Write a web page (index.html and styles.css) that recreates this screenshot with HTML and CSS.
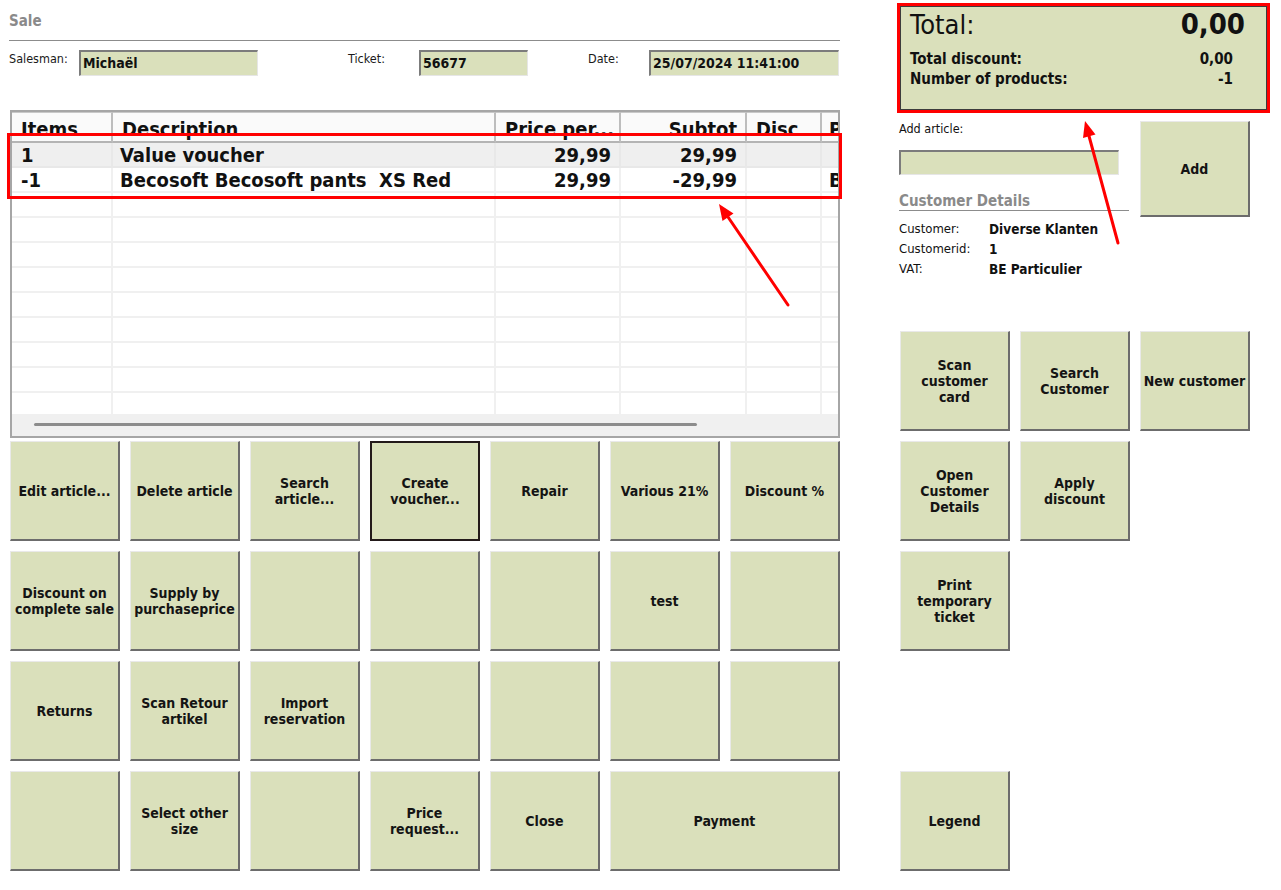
FILE: index.html
```html
<!DOCTYPE html>
<html>
<head>
<meta charset="utf-8">
<title>Sale</title>
<link rel="stylesheet" href="styles.css">
</head>
<body>
<div class="screen">
  <div class="left">
    <div class="title">Sale</div>
    <div class="form-row">
      <div class="lbl">Salesman:</div>
      <div class="field">Michaël</div>
      <div></div>
      <div class="lbl">Ticket:</div>
      <div class="field">56677</div>
      <div></div>
      <div class="lbl">Date:</div>
      <div class="field">25/07/2024 11:41:00</div>
    </div>

    <div class="grid">
      <div class="grid-head">
        <div class="hc">Items</div>
        <div class="hc">Description</div>
        <div class="hc num">Price per...</div>
        <div class="hc num">Subtot</div>
        <div class="hc">Disc</div>
        <div class="hc last">P</div>
      </div>
      <div class="grid-body">
        <div class="gr sel"><div class="c">1</div><div class="c">Value voucher</div><div class="c num">29,99</div><div class="c num">29,99</div><div class="c"></div><div class="c last"></div></div>
        <div class="gr"><div class="c">-1</div><div class="c">Becosoft Becosoft pants&nbsp; XS Red</div><div class="c num">29,99</div><div class="c num">-29,99</div><div class="c"></div><div class="c last">B</div></div>
        <div class="gr"><div class="c"></div><div class="c"></div><div class="c"></div><div class="c"></div><div class="c"></div><div class="c last"></div></div>
        <div class="gr"><div class="c"></div><div class="c"></div><div class="c"></div><div class="c"></div><div class="c"></div><div class="c last"></div></div>
        <div class="gr"><div class="c"></div><div class="c"></div><div class="c"></div><div class="c"></div><div class="c"></div><div class="c last"></div></div>
        <div class="gr"><div class="c"></div><div class="c"></div><div class="c"></div><div class="c"></div><div class="c"></div><div class="c last"></div></div>
        <div class="gr"><div class="c"></div><div class="c"></div><div class="c"></div><div class="c"></div><div class="c"></div><div class="c last"></div></div>
        <div class="gr"><div class="c"></div><div class="c"></div><div class="c"></div><div class="c"></div><div class="c"></div><div class="c last"></div></div>
        <div class="gr"><div class="c"></div><div class="c"></div><div class="c"></div><div class="c"></div><div class="c"></div><div class="c last"></div></div>
        <div class="gr"><div class="c"></div><div class="c"></div><div class="c"></div><div class="c"></div><div class="c"></div><div class="c last"></div></div>
        <div class="gr"><div class="c"></div><div class="c"></div><div class="c"></div><div class="c"></div><div class="c"></div><div class="c last"></div></div>
      </div>
      <div class="hscroll"><div class="thumb"></div></div>
    </div>

    <div class="buttons">
      <div class="btn">Edit article...</div>
      <div class="btn">Delete article</div>
      <div class="btn">Search<br>article...</div>
      <div class="btn focus">Create<br>voucher...</div>
      <div class="btn">Repair</div>
      <div class="btn">Various 21%</div>
      <div class="btn">Discount %</div>

      <div class="btn">Discount on<br>complete sale</div>
      <div class="btn">Supply by<br>purchaseprice</div>
      <div class="btn"></div>
      <div class="btn"></div>
      <div class="btn"></div>
      <div class="btn">test</div>
      <div class="btn"></div>

      <div class="btn">Returns</div>
      <div class="btn">Scan Retour<br>artikel</div>
      <div class="btn">Import<br>reservation</div>
      <div class="btn"></div>
      <div class="btn"></div>
      <div class="btn"></div>
      <div class="btn"></div>

      <div class="btn"></div>
      <div class="btn">Select other<br>size</div>
      <div class="btn"></div>
      <div class="btn">Price<br>request...</div>
      <div class="btn">Close</div>
      <div class="btn span2">Payment</div>
    </div>
  </div>

  <div class="right">
    <div class="total-panel">
      <div class="total-main">
        <span class="total-lbl">Total:</span>
        <span class="total-val">0,00</span>
      </div>
      <div class="total-sub">
        <div class="sub-row"><span>Total discount:</span><span>0,00</span></div>
        <div class="sub-row"><span>Number of products:</span><span>-1</span></div>
      </div>
    </div>

    <div class="add-area">
      <div class="add-left">
        <div class="add-lbl">Add article:</div>
        <div class="add-field"></div>
        <div class="cust-title">Customer Details</div>
        <div class="cust-row"><span class="cust-key">Customer:</span><span class="cust-val">Diverse Klanten</span></div>
        <div class="cust-row"><span class="cust-key">Customerid:</span><span class="cust-val">1</span></div>
        <div class="cust-row"><span class="cust-key">VAT:</span><span class="cust-val">BE Particulier</span></div>
      </div>
      <div class="btn add-btn">Add</div>
    </div>

    <div class="cust-buttons">
      <div class="btn">Scan<br>customer<br>card</div>
      <div class="btn">Search<br>Customer</div>
      <div class="btn">New customer</div>
      <div class="btn">Open<br>Customer<br>Details</div>
      <div class="btn">Apply<br>discount</div>
      <div class="btn r3">Print<br>temporary<br>ticket</div>
      <div class="btn r5">Legend</div>
    </div>
  </div>

  <svg class="annot" width="1281" height="890" viewBox="0 0 1281 890">
    <rect x="8.5" y="134.5" width="832" height="63" fill="none" stroke="#ff0000" stroke-width="3"/>
    <line x1="788" y1="305" x2="728" y2="217" stroke="#ff0000" stroke-width="3" stroke-linecap="round"/>
    <polygon points="719,204 733.5,213.5 722.5,221" fill="#ff0000"/>
    <line x1="1118" y1="243" x2="1089" y2="136" stroke="#ff0000" stroke-width="3" stroke-linecap="round"/>
    <polygon points="1085,121 1095.5,134.5 1083,138" fill="#ff0000"/>
  </svg>
</div>
</body>
</html>
```

FILE: styles.css
```css
* { box-sizing: border-box; }

body {
  margin: 0;
  background: #ffffff;
  color: #111111;
  font-family: "DejaVu Sans Condensed", "DejaVu Sans", sans-serif;
  font-stretch: condensed;
}

.screen {
  position: relative;
  display: flex;
  width: 1281px;
  height: 890px;
  overflow: hidden;
}

/* ---------- left column ---------- */
.left {
  width: 831px;
  margin-left: 9px;
}

.title {
  height: 41px;
  padding-top: 12px;
  border-bottom: 1px solid #8c8c8c;
  font-size: 15px;
  line-height: 18px;
  font-weight: bold;
  color: #8a8a8a;
}

.form-row {
  display: grid;
  grid-template-columns: 70px 179px 90px 71px 109px 60px 61px 190px;
  height: 26px;
  margin-top: 9px;
}

.lbl {
  font-size: 12.5px;
  line-height: 17px;
  color: #1a1a1a;
}

.field {
  height: 26px;
  background: #dae0bb;
  border-top: 2px solid #7c7c7c;
  border-left: 2px solid #7c7c7c;
  border-right: 1px solid #e6e6e6;
  border-bottom: 1px solid #e6e6e6;
  padding-left: 2px;
  font-size: 14px;
  font-weight: bold;
  line-height: 23px;
  white-space: nowrap;
  overflow: hidden;
}

/* ---------- article grid ---------- */
.grid {
  width: 830px;
  height: 328px;
  margin-top: 34px;
  margin-left: 1px;
  border: 2px solid #a6a6a6;
  background: #ffffff;
}

.grid-head,
.gr {
  display: grid;
  grid-template-columns: 101px 383px 125px 126px 75px 16px;
}

.grid-head {
  height: 31px;
}

.hc {
  background: #fafafa;
  border-top: 1px solid #c8c8c8;
  border-right: 2px solid #bdbdbd;
  border-bottom: 2px solid #b4b4b4;
  padding: 5px 8px 0 9px;
  font-size: 20px;
  line-height: 23px;
  font-weight: bold;
  white-space: nowrap;
  overflow: hidden;
}

.hc.last { padding-left: 7px; border-right: none; }

.num { text-align: right; }

.grid-body {
  height: 271px;
  overflow: hidden;
}

.gr {
  height: 25px;
}

.gr.sel { background: #efefef; }

.c {
  border-right: 2px solid #f0f0f0;
  border-bottom: 2px solid #f0f0f0;
  padding: 0 8px 0 9px;
  font-size: 20px;
  line-height: 24px;
  font-weight: bold;
  white-space: nowrap;
  overflow: hidden;
}

.gr.sel .c { border-color: #e8e8e8; }

.c + .c { padding-left: 7px; }
.c.last { padding: 0 0 0 7px; border-right: none; }

.hscroll {
  height: 22px;
  background: #f0f0f0;
  padding: 9px 0 0 22px;
}

.thumb {
  width: 663px;
  height: 3px;
  border-radius: 2px;
  background: #8c8c8c;
}

/* ---------- buttons ---------- */
.buttons {
  display: grid;
  grid-template-columns: repeat(7, 110px);
  grid-auto-rows: 100px;
  gap: 10px;
  margin-top: 3px;
  margin-left: 1px;
}

.btn {
  display: flex;
  align-items: center;
  justify-content: center;
  text-align: center;
  background: #dae0bb;
  border-top: 1px solid #e9e9e9;
  border-left: 1px solid #e9e9e9;
  border-right: 2px solid #6c6c6c;
  border-bottom: 2px solid #6c6c6c;
  font-size: 14px;
  line-height: 16px;
  font-weight: bold;
  color: #141414;
}

.btn.focus {
  border: 2px solid #231a1a;
}

.btn.span2 { grid-column: span 2; }

/* ---------- right column ---------- */
.right {
  width: 372px;
  margin-left: 59px;
}

.total-panel {
  width: 367px;
  height: 104px;
  margin-top: 6px;
  margin-left: 1px;
  background: #dae0bb;
  border: 1px solid #3c3c3c;
  outline: 3px solid #ff0000;
  padding: 2px 21px 0 9px;
}

.total-main {
  display: flex;
  justify-content: space-between;
  align-items: baseline;
  height: 30px;
  line-height: 30px;
}

.total-lbl {
  font-size: 27px;
  font-weight: normal;
}

.total-val {
  font-size: 29px;
  font-weight: bold;
}

.total-sub {
  margin-top: 10px;
  margin-right: 12px;
}

.sub-row {
  display: flex;
  justify-content: space-between;
  font-size: 15px;
  line-height: 20px;
  font-weight: bold;
}

.add-area {
  display: flex;
  align-items: flex-start;
  margin-top: 11px;
}

.add-left {
  width: 230px;
}

.add-lbl {
  font-size: 12.5px;
  line-height: 16px;
}

.add-field {
  width: 220px;
  height: 25px;
  margin-top: 13px;
  background: #dae0bb;
  border-top: 2px solid #7c7c7c;
  border-left: 2px solid #7c7c7c;
  border-right: 1px solid #e6e6e6;
  border-bottom: 1px solid #e6e6e6;
}

.cust-title {
  margin-top: 17px;
  height: 19px;
  border-bottom: 1px solid #8c8c8c;
  font-size: 15px;
  line-height: 18px;
  font-weight: bold;
  color: #8a8a8a;
}

.cust-row {
  display: flex;
  font-size: 13px;
  line-height: 20px;
}

.cust-title + .cust-row { margin-top: 8px; }

.cust-key { width: 90px; }
.cust-val { font-weight: bold; font-size: 13.5px; }

.add-btn {
  width: 110px;
  height: 96px;
  margin-left: 11px;
}

.cust-buttons {
  display: grid;
  grid-template-columns: repeat(3, 110px);
  grid-template-rows: repeat(5, 100px);
  gap: 10px;
  margin-top: 52px;
  margin-left: 1px;
}

.r3 { grid-row: 3; grid-column: 1; }
.r5 { grid-row: 5; grid-column: 1; }

/* ---------- annotation overlay ---------- */
.annot {
  position: absolute;
  left: 0;
  top: 0;
  pointer-events: none;
}
```
